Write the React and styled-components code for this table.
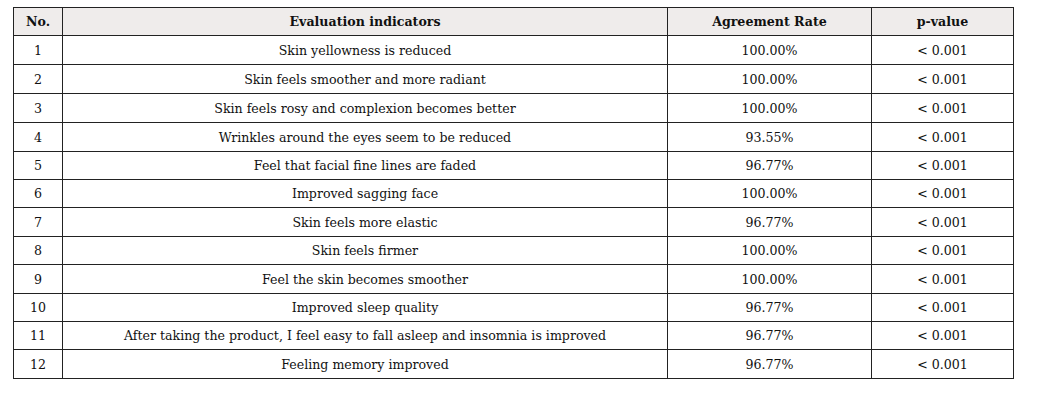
import React from "react";
import styled, { createGlobalStyle } from "styled-components";

const Global = createGlobalStyle`
  html, body { margin: 0; padding: 0; background: #ffffff; }
  body { font-family: "DejaVu Serif", "Liberation Serif", serif; }
`;

const Page = styled.div`
  padding: 7px 0 0 13px;
`;

const Table = styled.table`
  border-collapse: collapse;
  width: 1000px;
  table-layout: fixed;
  font-family: "DejaVu Serif", "Liberation Serif", serif;
  font-size: 12.6px;
  color: #111;
`;

const Col = styled.col`
  width: ${(p) => p.$w}px;
`;

const HeadCell = styled.th`
  background: #efeceb;
  border: 1px solid #222;
  height: 27px;
  padding: 0 4px;
  font-weight: bold;
  text-align: center;
  vertical-align: middle;
`;

const Cell = styled.td`
  border: 1px solid #222;
  height: ${(p) => p.$h}px;
  padding: 0 4px;
  text-align: center;
  vertical-align: middle;
`;

const rows = [
  ["1", "Skin yellowness is reduced", "100.00%"],
  ["2", "Skin feels smoother and more radiant", "100.00%"],
  ["3", "Skin feels rosy and complexion becomes better", "100.00%"],
  ["4", "Wrinkles around the eyes seem to be reduced", "93.55%"],
  ["5", "Feel that facial fine lines are faded", "96.77%"],
  ["6", "Improved sagging face", "100.00%"],
  ["7", "Skin feels more elastic", "96.77%"],
  ["8", "Skin feels firmer", "100.00%"],
  ["9", "Feel the skin becomes smoother", "100.00%"],
  ["10", "Improved sleep quality", "96.77%"],
  ["11", "After taking the product, I feel easy to fall asleep and insomnia is improved", "96.77%"],
  ["12", "Feeling memory improved", "96.77%"],
];

const heights = [28, 28, 28, 28, 27, 27, 28, 27, 28, 27, 27, 28];

export default function App() {
  return (
    <>
      <Global />
      <Page>
        <Table>
          <colgroup>
            <Col $w={49} />
            <Col $w={605} />
            <Col $w={204} />
            <Col $w={142} />
          </colgroup>
          <thead>
            <tr>
              <HeadCell>No.</HeadCell>
              <HeadCell>Evaluation indicators</HeadCell>
              <HeadCell>Agreement Rate</HeadCell>
              <HeadCell>p-value</HeadCell>
            </tr>
          </thead>
          <tbody>
            {rows.map((r, i) => (
              <tr key={r[0]}>
                <Cell $h={heights[i]}>{r[0]}</Cell>
                <Cell $h={heights[i]}>{r[1]}</Cell>
                <Cell $h={heights[i]}>{r[2]}</Cell>
                <Cell $h={heights[i]}>&lt; 0.001</Cell>
              </tr>
            ))}
          </tbody>
        </Table>
      </Page>
    </>
  );
}
